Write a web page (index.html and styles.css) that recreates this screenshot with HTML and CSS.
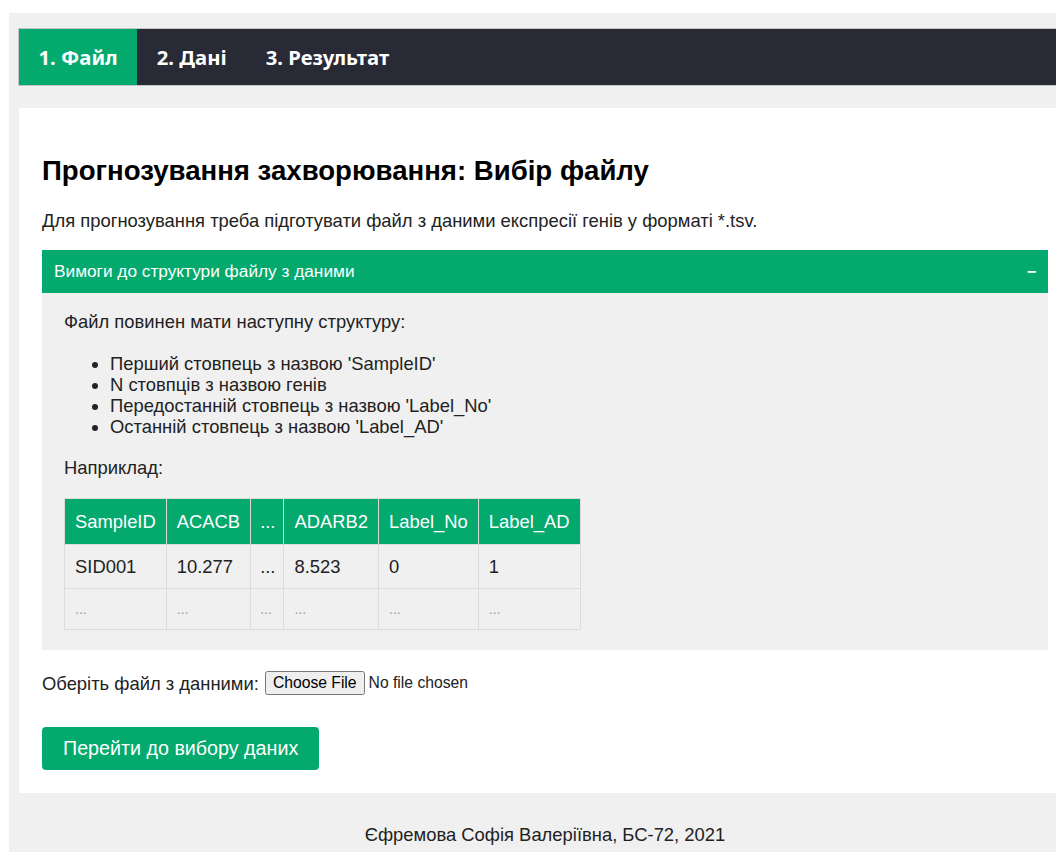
FILE: index.html
```html
<!DOCTYPE html>
<html lang="uk">
<head>
<meta charset="utf-8">
<title>Прогнозування захворювання</title>
<link rel="stylesheet" href="styles.css">
</head>
<body>
<div class="app">
  <nav class="steps">
    <a class="step active" href="#">1. Файл</a>
    <a class="step" href="#">2. Дані</a>
    <a class="step" href="#">3. Результат</a>
  </nav>

  <main class="panel">
    <h1 class="title">Прогнозування захворювання: Вибір файлу</h1>
    <p class="lead">Для прогнозування треба підготувати файл з даними експресії генів у форматі *.tsv.</p>

    <section class="accordion">
      <div class="accordion-head">
        <span>Вимоги до структури файлу з даними</span>
        <span class="toggle">−</span>
      </div>
      <div class="accordion-body">
        <p class="text">Файл повинен мати наступну структуру:</p>
        <ul class="rules">
          <li>Перший стовпець з назвою 'SampleID'</li>
          <li>N стовпців з назвою генів</li>
          <li>Передостанній стовпець з назвою 'Label_No'</li>
          <li>Останній стовпець з назвою 'Label_AD'</li>
        </ul>
        <p class="text example">Наприклад:</p>
        <table class="sample">
          <thead>
            <tr><th>SampleID</th><th>ACACB</th><th class="gap">...</th><th>ADARB2</th><th>Label_No</th><th>Label_AD</th></tr>
          </thead>
          <tbody>
            <tr><td>SID001</td><td>10.277</td><td class="gap">...</td><td>8.523</td><td>0</td><td>1</td></tr>
            <tr class="more"><td>...</td><td>...</td><td class="gap">...</td><td>...</td><td>...</td><td>...</td></tr>
          </tbody>
        </table>
      </div>
    </section>

    <form class="upload">
      <label class="file-row">Оберіть файл з данними: <input class="file" type="file" accept=".tsv"></label>
      <button class="next" type="button">Перейти до вибору даних</button>
    </form>
  </main>

  <footer class="footer">Єфремова Софія Валеріївна, БС-72, 2021</footer>
</div>
</body>
</html>
```

FILE: styles.css
```css
html {
  overflow: hidden;
}

body {
  margin: 0;
  background: #ffffff;
  font-family: "Liberation Sans", Arial, sans-serif;
  font-size: 18.4px;
  line-height: 21px;
  color: #222222;
}

.app {
  box-sizing: border-box;
  width: 1072px;
  min-height: 900px;
  margin: 13px 0 0 9px;
  padding: 16px 10px 0;
  background: #f0f0f0;
}

/* step navigation */
.steps {
  display: flex;
  height: 56px;
  background: #282a36;
  box-shadow: 0 0 0 1px #c4c4c8;
}

.step {
  display: flex;
  align-items: center;
  padding: 0 19.5px;
  color: #ffffff;
  text-decoration: none;
  font-family: "Noto Sans", sans-serif;
  font-weight: 700;
  font-size: 20.3px;
}

.step.active {
  background: #04a96d;
}

/* main white card */
.panel {
  margin-top: 23px;
  padding: 24px 23px 23px;
  background: #ffffff;
}

.title {
  margin: 23px 0 0;
  font-size: 27.6px;
  line-height: 31px;
  font-weight: 700;
  color: #000000;
}

.lead {
  margin: 24px 0 0;
}

/* collapsible requirements block */
.accordion {
  margin-top: 19px;
}

.accordion-head {
  display: flex;
  justify-content: space-between;
  align-items: center;
  height: 43px;
  padding: 0 12px;
  background: #04a96d;
  color: #ffffff;
  font-size: 17.25px;
}

.toggle {
  font-weight: 700;
  font-size: 16px;
}

.accordion-body {
  padding: 18px 22px 20px;
  background: #f0f0f0;
}

.text {
  margin: 0;
}

.rules {
  margin: 21px 0 0;
  padding-left: 46px;
}

.example {
  margin-top: 20px;
}

.sample {
  margin-top: 20px;
  border-collapse: collapse;
}

.sample th,
.sample td {
  border: 1px solid #dcdcdc;
  padding: 11px 10px;
  text-align: left;
  white-space: nowrap;
}

.sample th {
  padding: 12px 10px;
  background: #04a96d;
  color: #ffffff;
  font-weight: 400;
}

.sample .more td {
  padding: 12px 10px;
  font-size: 14px;
  line-height: 16px;
  color: #9a9a9a;
}

.sample .gap,
.sample .more .gap {
  padding-left: 9px;
  padding-right: 8px;
}

/* upload form */
.upload {
  display: flex;
  flex-direction: column;
  align-items: flex-start;
  margin-top: 21px;
}

.file-row {
  display: flex;
  align-items: center;
  gap: 6px;
}

.file {
  font-family: "Liberation Sans", Arial, sans-serif;
  font-size: 15.7px;
}

.next {
  margin-top: 32px;
  height: 43px;
  padding: 0 21px;
  border: none;
  border-radius: 4px;
  background: #04a96d;
  color: #ffffff;
  font-family: "Liberation Sans", Arial, sans-serif;
  font-size: 19.7px;
}

.footer {
  padding-top: 31px;
  text-align: center;
}
```
